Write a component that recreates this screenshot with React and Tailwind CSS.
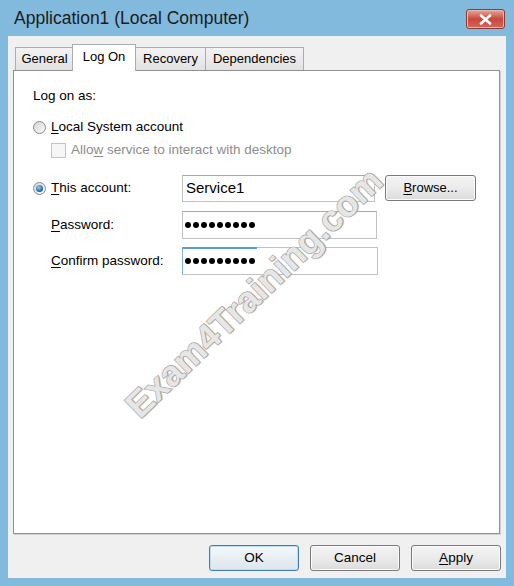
import React from "react";

const U = ({ children }) => (
  <span className="underline underline-offset-[2px] decoration-1">{children}</span>
);

function Radio({ checked }) {
  return (
    <span className="w-[13px] h-[13px] shrink-0 rounded-full border border-[#8a8a8a] bg-linear-to-br from-[#d6d6d6] to-[#fafafa] flex items-center justify-center">
      {checked && (
        <span className="w-[7px] h-[7px] rounded-full bg-[radial-gradient(circle_at_40%_35%,#8fd0f5,#1a5f9e_70%)]" />
      )}
    </span>
  );
}

function Dots() {
  return (
    <div className="flex gap-[2px]">
      {Array.from({ length: 9 }).map((_, i) => (
        <span key={i} className="w-[6px] h-[6px] rounded-full bg-black" />
      ))}
    </div>
  );
}

function Btn({ children, primary }) {
  return (
    <div
      className={
        "w-[90px] h-[26px] rounded-[3px] border flex items-center justify-center text-[13.5px] text-black " +
        (primary
          ? "border-[#3c7fb1] bg-linear-to-b from-[#f4f8fb] to-[#dde6ec] shadow-[inset_0_0_0_1px_#b9def5]"
          : "border-[#7a7a7a] bg-linear-to-b from-[#f3f3f3] via-[#ebebeb] to-[#dcdcdc] shadow-[inset_0_0_0_1px_#fbfbfb]")
      }
    >
      {children}
    </div>
  );
}

export default function App() {
  return (
    <div className="relative w-[514px] h-[586px] overflow-hidden bg-[#82badd] flex flex-col font-['Liberation_Sans',Arial,sans-serif]">
      {/* Title bar */}
      <div className="h-[36px] shrink-0 flex items-center justify-between pl-[14px] pr-[9px]">
        <span className="text-[17.5px] text-[#1b1b1b] leading-none mt-[2px]">
          Application1 (Local Computer)
        </span>
        <div className="mt-[2px] w-[39px] h-[20px] rounded-[3px] border border-[#8e3b34] bg-linear-to-b from-[#e9a59c] via-[#c9463b] to-[#d7675b] flex items-center justify-center shadow-[inset_0_0_0_1px_#f0b7ae]">
          <svg width="13" height="11" viewBox="0 0 13 11">
            <path d="M2 1.5 L11 9.5 M11 1.5 L2 9.5" stroke="#ffffff" strokeWidth="2.6" strokeLinecap="round" />
          </svg>
        </div>
      </div>

      {/* Client area */}
      <div className="flex-1 mx-[8px] mb-[8px] bg-[#f0f0f0] flex flex-col pt-[8px] pl-[5px] pr-[6px] pb-[7px]">
        {/* Tabs */}
        <div className="h-[26px] flex items-end pl-[2px] text-[13px] text-black">
          <div className="w-[59px] h-[23px] border border-b-0 border-[#acacac] bg-linear-to-b from-[#f3f3f3] to-[#e2e2e2] flex items-center justify-center">
            General
          </div>
          <div className="relative z-10 -ml-[2px] w-[64px] h-[27px] -mb-[1px] border border-b-0 border-[#acacac] bg-white flex items-center justify-center pb-[3px]">
            Log On
          </div>
          <div className="-ml-[1px] w-[71px] h-[23px] border border-b-0 border-[#acacac] bg-linear-to-b from-[#f3f3f3] to-[#e2e2e2] flex items-center justify-center">
            Recovery
          </div>
          <div className="-ml-[1px] w-[99px] h-[23px] border border-b-0 border-[#acacac] bg-linear-to-b from-[#f3f3f3] to-[#e2e2e2] flex items-center justify-center">
            Dependencies
          </div>
        </div>

        {/* Panel */}
        <div className="flex-1 bg-white border border-[#8f9196] shadow-[1px_1px_0_#d0d0d0] pl-[19px] pt-[15px] flex flex-col text-[13.5px] text-black">
          <div className="h-[20px] flex items-center">Log on as:</div>

          <div className="mt-[11px] h-[20px] flex items-center gap-[5px]">
            <Radio />
            <span>
              <U>L</U>ocal System account
            </span>
          </div>

          <div className="mt-[4px] h-[18px] flex items-center gap-[5px] pl-[18px] text-[#8d8d8d]">
            <span className="w-[15px] h-[15px] border border-[#c4c4c4] bg-[#f6f6f6]" />
            <span>
              Allo<U>w</U> service to interact with desktop
            </span>
          </div>

          <div className="mt-[15px] h-[28px] flex items-center">
            <div className="w-[149px] flex items-center gap-[5px]">
              <Radio checked />
              <span>
                <U>T</U>his account:
              </span>
            </div>
            <div className="w-[193px] h-[27px] border border-[#c2c2c2] border-t-[#a9a9a9] flex items-center pl-[3px] text-[15px]">
              Service1
            </div>
            <div className="ml-[10px] w-[91px] h-[26px] rounded-[3px] border border-[#7a7a7a] bg-linear-to-b from-[#f3f3f3] via-[#ebebeb] to-[#dcdcdc] shadow-[inset_0_0_0_1px_#fbfbfb] flex items-center justify-center text-[13px]">
              <span>
                <U>B</U>rowse...
              </span>
            </div>
          </div>

          <div className="mt-[9px] h-[28px] flex items-center">
            <div className="w-[149px] pl-[18px]">
              <U>P</U>assword:
            </div>
            <div className="w-[195px] h-[28px] border border-[#c2c2c2] border-t-[#a9a9a9] flex items-center pl-[2px]">
              <Dots />
            </div>
          </div>

          <div className="mt-[8px] h-[28px] flex items-center">
            <div className="w-[149px] pl-[18px]">
              <U>C</U>onfirm password:
            </div>
            <div className="relative w-[196px] h-[28px] border border-[#c2c2c2] border-l-[#7fb3d6] flex items-center pl-[2px]">
              <span className="absolute -top-[1px] -left-[1px] w-[75px] h-[2px] bg-[#5b9fd0]" />
              <Dots />
            </div>
          </div>
        </div>

        {/* Buttons */}
        <div className="mt-[11px] -mr-[1px] flex justify-end gap-[11px]">
          <Btn primary>OK</Btn>
          <Btn>Cancel</Btn>
          <Btn>
            <span>
              <U>A</U>pply
            </span>
          </Btn>
        </div>
      </div>

      {/* Watermark */}
      <div className="pointer-events-none absolute inset-0 flex items-center justify-center">
        <span className="translate-x-[-3px] rotate-[-44deg] whitespace-nowrap text-[36px] font-bold text-[#e6e6e6] [-webkit-text-stroke:1.3px_#a4a4a4] [paint-order:stroke_fill] [text-shadow:1px_1px_1px_#a0a0a0]">
          Exam4Training.com
        </span>
      </div>
    </div>
  );
}
